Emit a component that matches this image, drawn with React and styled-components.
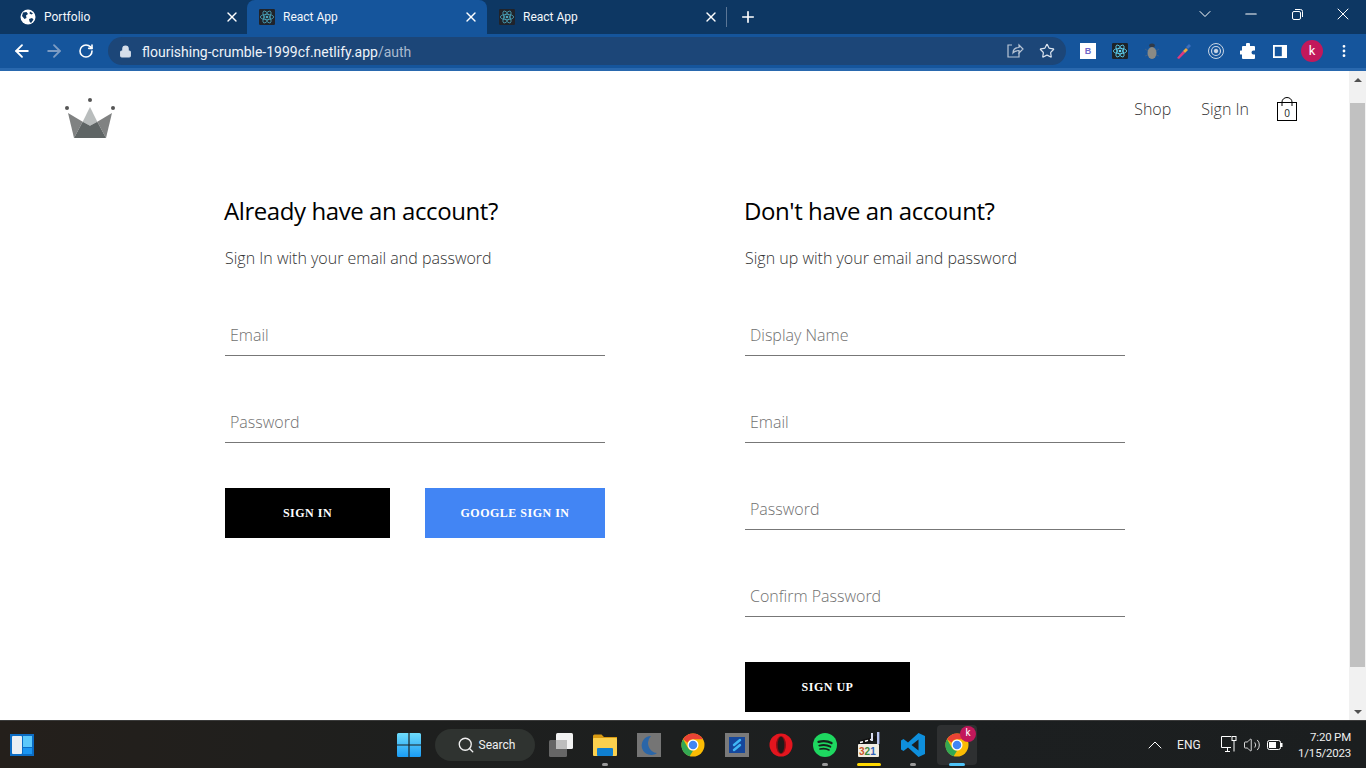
import React from "react";
import styled, { createGlobalStyle } from "styled-components";
import { ArrowLeft, ArrowRight, RotateCw, Lock, X, Plus, ChevronDown, Minus, Star, MoreVertical, Search, ChevronUp, Volume2 } from "lucide-react";

const Global = createGlobalStyle`
  html, body { margin: 0; padding: 0; height: 100%; overflow: hidden; background: #fff; }
  #root { height: 768px; }
  * { box-sizing: border-box; }
`;
const Shell = styled.div`
  width: 1366px; height: 768px; display: flex; flex-direction: column; overflow: hidden;
  font-family: "Open Sans", sans-serif;
`;
const TabStrip = styled.div`
  height: 34px; background: #0d3763; display: flex; align-items: stretch; padding-left: 8px; color: #fff; flex: none;
`;
const Tab = styled.div`
  width: 240px; flex: none; display: flex; align-items: center; padding: 0 8px 0 12px; gap: 8px;
  background: ${p => (p.$active ? "#15559c" : "transparent")};
  border-radius: ${p => (p.$active ? "8px 8px 0 0" : "0")};
  &:first-child { width: 239px; padding-right: 7px; }
`;
const TabTitle = styled.span`
  flex: 1; font: 12px "Roboto", sans-serif; color: #f4f7fb;
`;
const Sep = styled.div`
  width: 1px; height: 20px; background: #5b7696; align-self: center; margin-left: -1px;
`;
const NewTab = styled.div`
  width: 42px; display: flex; align-items: center; justify-content: center;
`;
const WinControls = styled.div`
  margin-left: auto; display: flex; align-items: center; height: 28px; color: #fff;
`;
const WinBtn = styled.div`
  width: 46px; display: flex; justify-content: center; align-items: center;
`;
const Toolbar = styled.div`
  height: 37px; flex: none; background: #15559c; border-bottom: 3px solid #2968ae; display: flex; align-items: center; padding: 0 6px; color: #fff;
`;
const NavBtn = styled.div`
  width: 32px; height: 28px; display: flex; align-items: center; justify-content: center;
  color: ${p => (p.$dim ? "#7d9cc3" : "#fff")};
`;
const Omni = styled.div`
  width: 958px; height: 28px; margin-left: 6px; border-radius: 14px; background: #1c4678; display: flex; align-items: center; padding: 0 8px 0 11px; gap: 10px; flex: none;
`;
const Url = styled.div`
  flex: 1; font: 14px "Roboto", sans-serif; color: #eef3f9; white-space: nowrap; padding-top: 2px;
  span { color: #a9bad0; }
`;
const OmniIcon = styled.div`
  width: 22px; height: 22px; display: flex; align-items: center; justify-content: center; color: #c9d5e4;
`;
const Exts = styled.div`
  display: flex; align-items: center; margin-left: 6px;
`;
const ExtSlot = styled.div`
  width: 32px; height: 28px; display: flex; align-items: center; justify-content: center;
`;
const BSquare = styled.div`
  width: 16px; height: 16px; background: #fff; color: #6f66c8; font: bold 9px "Liberation Sans", sans-serif; display: flex; align-items: center; justify-content: center;
`;
const Avatar = styled.div`
  width: ${p => p.$s || 22}px; height: ${p => p.$s || 22}px; border-radius: 50%; background: #c2185b; color: #fff;
  font: ${p => p.$f || 13}px "Roboto", sans-serif; display: flex; align-items: center; justify-content: center; padding-bottom: 2px;
`;

const Viewport = styled.div`
  flex: 1; min-height: 0; display: flex; background: #fff;
`;
const Page = styled.div`
  flex: 1; min-width: 0; padding: 0 52px 0 65px; overflow: hidden;
`;
const Header = styled.header`
  height: 113px; display: flex; justify-content: space-between; align-items: flex-start; padding-top: 27px;
`;
const Links = styled.nav`
  display: flex; align-items: center; gap: 30px; font-weight: 300; font-size: 16px; color: #333; margin-top: -1px;
`;
const Bag = styled.div`
  width: 20px; height: 24px; position: relative; margin-left: -2px;
  svg { display: block; }
`;
const BagCount = styled.span`
  position: absolute; left: 0; right: 0; top: 9px; text-align: center; font-size: 10px; line-height: 14px; color: #222; font-weight: 400;
`;
const Forms = styled.main`
  width: 900px; margin-left: 160px; display: flex; justify-content: space-between; align-items: flex-start;
`;
const Form = styled.section`
  width: 380px; display: flex; flex-direction: column;
`;
const Heading = styled.h2`
  margin: 9px 0 0 -1px; font-size: 24px; line-height: 36px; font-weight: 400; color: #000; letter-spacing: -0.42px;
`;
const Sub = styled.p`
  margin: 17px 0 0; font-size: 16px; line-height: 24px; font-weight: 300; color: #333; white-space: nowrap;
`;
const Fields = styled.div`
  margin-top: 24px; display: flex; flex-direction: column; gap: 45px; padding-top: 20px;
`;
const Field = styled.div`
  height: 42px; border-bottom: 1px solid #777; padding: 0 5px; display: flex; align-items: center;
  font-size: 16px; font-weight: 300; color: #707070;
`;
const Actions = styled.div`
  margin-top: 45px; display: flex; justify-content: space-between;
`;
const Btn = styled.button`
  width: ${p => p.$w || 165}px; height: 50px; border: 0; background: ${p => p.$bg || "#000"}; color: #fff; padding: 0;
  font: bold 12px "Liberation Serif", serif; letter-spacing: 0.5px; text-transform: uppercase;
`;
const Scrollbar = styled.div`
  width: 17px; flex: none; background: #f1f1f1; display: flex; flex-direction: column; align-items: center;
`;
const SbArrow = styled.div`
  height: 17px; flex: none; width: 100%; display: flex; align-items: center; justify-content: center;
  &::before {
    content: ""; border-left: 4px solid transparent; border-right: 4px solid transparent;
    ${p => (p.$up ? "border-bottom: 4px solid #505050;" : "border-top: 4px solid #505050;")}
  }
`;
const SbThumb = styled.div`
  width: 15px; height: 564px; margin-top: 15px; background: #c1c1c1;
`;
const SbRest = styled.div`
  flex: 1;
`;

const Taskbar = styled.footer`
  height: 48px; flex: none; background: linear-gradient(90deg, #241f1b 0%, #1e1f1e 30%, #1c1f20 70%, #1b1e1f 100%);
  border-top: 1px solid #3b3b3b; display: grid; grid-template-columns: 1fr auto 1fr; align-items: center; color: #fff;
`;
const TbLeft = styled.div`
  padding-left: 10px; display: flex; align-items: center;
`;
const TbCenter = styled.div`
  display: flex; align-items: center; height: 47px;
`;
const TbItem = styled.div`
  width: 44px; height: 44px; display: flex; align-items: center; justify-content: center; position: relative;
  ${p => p.$active && `&::before { content: ""; position: absolute; inset: 2px; border-radius: 4px; background: #2e3031; }`}
  > svg { position: relative; }
`;
const Dot = styled.span`
  position: absolute; bottom: 1px; left: 50%; transform: translateX(-50%); height: 3px; border-radius: 2px;
  width: ${p => p.$w || 6}px; background: ${p => p.$c || "#9a9a9a"};
`;
const Badge = styled.span`
  position: absolute; top: 3px; right: 3px;
`;
const SearchPill = styled.div`
  width: 100px; height: 32px; margin: 0 4px; border-radius: 16px; background: #2f3330; display: flex; align-items: center; justify-content: center; gap: 4px; padding-left: 2px;
  font: 12px "Roboto", sans-serif; color: #f0f0f0;
`;
const Tray = styled.div`
  display: flex; align-items: center; justify-content: flex-end; padding-right: 15px; color: #fff;
`;
const Lang = styled.span`
  font: 12px "Roboto", sans-serif; margin: 0 20px 0 10px; color: #eee; width: 24px; white-space: nowrap;
`;
const TrayIcons = styled.div`
  display: flex; align-items: center; gap: 6px; margin-right: 15px;
`;
const Clock = styled.div`
  font: 11.5px/16px "Roboto", sans-serif; letter-spacing: -0.2px; text-align: right; color: #eee; white-space: nowrap;
`;

const Atom = ({ size = 16, bg = "#20232a", color = "#4aa6bd" }) => (
  <svg width={size} height={size} viewBox="0 0 24 24" style={{ flex: "none" }}>
    <rect width="24" height="24" rx="2" fill={bg} />
    <g fill="none" stroke={color} strokeWidth="1.2">
      <ellipse cx="12" cy="12" rx="10" ry="4" />
      <ellipse cx="12" cy="12" rx="10" ry="4" transform="rotate(60 12 12)" />
      <ellipse cx="12" cy="12" rx="10" ry="4" transform="rotate(120 12 12)" />
    </g>
    <circle cx="12" cy="12" r="2" fill={color} />
  </svg>
);
const Globe = () => (
  <svg width="16" height="16" viewBox="0 0 16 16" style={{ flex: "none" }}>
    <circle cx="8" cy="8" r="7.5" fill="#fff" />
    <path d="M3 3.5 6.5 3 8 5 6 6.5 6.500 9 4.500 10 2 7ZM9 10l3-1 1.500 1.500L11 14l-1.500-1.500ZM10 2.500l3 2-1.500 1-2-1Z" fill="#0d3763" />
  </svg>
);
const Crown = () => (
  <svg width="50" height="41" viewBox="0 0 50 41">
    <circle cx="2" cy="10" r="2" fill="#555" />
    <circle cx="25" cy="2" r="2" fill="#555" />
    <circle cx="48" cy="10" r="2" fill="#555" />
    <polygon points="3,15 17.7,23.7 9,40" fill="#808282" />
    <polygon points="47,15 32.3,23.7 41,40" fill="#808282" />
    <polygon points="25,9 17.7,23.7 25,27.7 32.3,23.7" fill="#b9bdbd" />
    <polygon points="9,40 17.7,23.7 25,27.7 32.3,23.7 41,40" fill="#5f6565" />
  </svg>
);
const ChromeLogo = ({ size = 24 }) => (
  <svg width={size} height={size} viewBox="0 0 48 48">
    <circle cx="24" cy="24" r="23" fill="#fbbc04" />
    <path d="M24 1a23 23 0 0 1 20 11.500H24a11.500 11.500 0 0 0-10.500 6.800L4.100 12.500A23 23 0 0 1 24 1Z" fill="#ea4335" />
    <path d="M4.100 12.500 14 29.800A11.500 11.500 0 0 0 24 35.500l-6.700 11A23 23 0 0 1 4.100 12.500Z" fill="#34a853" />
    <circle cx="24" cy="24" r="11" fill="#fff" />
    <circle cx="24" cy="24" r="8.500" fill="#4285f4" />
  </svg>
);
const WinLogo = () => (
  <svg width="24" height="24" viewBox="0 0 24 24">
    <defs>
      <linearGradient id="wl" x1="0" y1="0" x2="0" y2="1"><stop offset="0" stopColor="#6fdcfb" /><stop offset="1" stopColor="#1a9cf5" /></linearGradient>
    </defs>
    <path d="M0 1.500A1.500 1.500 0 0 1 1.500 0H11.400V11.400H0ZM12.600 0H22.500A1.500 1.500 0 0 1 24 1.500V11.400H12.600ZM0 12.600H11.400V24H1.500A1.500 1.500 0 0 1 0 22.500ZM12.600 12.600H24V22.500A1.500 1.500 0 0 1 22.500 24H12.600Z" fill="url(#wl)" />
  </svg>
);
const Widgets = () => (
  <svg width="24" height="22" viewBox="0 0 24 22">
    <rect width="24" height="22" fill="#0b6cc4" />
    <rect x="2" y="2" width="10" height="18" rx="1" fill="#e9eef3" />
    <rect x="13" y="2" width="9" height="11" fill="#5cc8fb" />
    <rect x="13" y="14" width="9" height="6" fill="#1a95f2" />
  </svg>
);
const TaskView = () => (
  <svg width="24" height="24" viewBox="0 0 24 24">
    <rect x="7" y="0" width="17" height="16" rx="1.500" fill="#f2f2f2" />
    <rect x="0" y="7" width="18" height="17" rx="1.500" fill="#6d6d6d" fillOpacity=".92" />
    <rect x="7" y="7" width="11" height="9" fill="#bdbdbd" />
  </svg>
);
const Folder = () => (
  <svg width="24" height="22" viewBox="0 0 24 22">
    <path d="M0 2a1.500 1.500 0 0 1 1.500-1.500h7L11 3h13v3H0Z" fill="#d99a12" />
    <rect y="4" width="24" height="18" rx="1" fill="#fbd04e" />
    <rect x="4" y="14" width="16" height="8" rx="1" fill="#0f7fd0" />
  </svg>
);
const MoonApp = () => (
  <svg width="24" height="24" viewBox="0 0 24 24">
    <rect width="24" height="24" fill="#757575" />
    <path d="M14 3a9.500 9.500 0 1 0 6 17A10 10 0 0 1 14 3Z" fill="#2a66a8" />
    <path d="M15 3a9 9 0 0 1 6 14A9 9 0 0 0 15 3Z" fill="#4a4f55" />
  </svg>
);
const Stack = () => (
  <svg width="24" height="24" viewBox="0 0 24 24">
    <rect width="24" height="24" fill="#7a7a7a" />
    <rect x="4" y="4" width="16" height="16" fill="#15479c" />
    <path d="M15 7 9 12M15 12l-6 5" fill="none" stroke="#3fb7f5" strokeWidth="2.400" strokeLinecap="round" />
  </svg>
);
const Opera = () => (
  <svg width="24" height="24" viewBox="0 0 24 24">
    <circle cx="12" cy="12" r="11.500" fill="#e3151e" />
    <ellipse cx="12" cy="12" rx="5" ry="9" fill="#8a0d14" />
    <ellipse cx="12" cy="12" rx="3.400" ry="8.200" fill="#201a1a" />
  </svg>
);
const Spotify = () => (
  <svg width="24" height="24" viewBox="0 0 24 24">
    <circle cx="12" cy="12" r="12" fill="#1ed760" />
    <g fill="none" stroke="#15221a" strokeLinecap="round">
      <path d="M5.500 8.800c4.500-1.200 9.500-.8 13 1.300" strokeWidth="2.300" />
      <path d="M6.300 12.600c4-1 8-.6 11 1.100" strokeWidth="1.900" />
      <path d="M7 16c3.200-.7 6.600-.4 9 1" strokeWidth="1.600" />
    </g>
  </svg>
);
const Clapper = () => (
  <svg width="24" height="26" viewBox="0 0 24 26">
    <path d="M1 9 19 4l1 4L2 13Z" fill="#111" />
    <path d="M3 10.500 6 9.700M8 9.200l3-.8M13 7.800l3-.8" stroke="#fff" strokeWidth="1.500" />
    <rect x="14" y="1" width="2" height="8" fill="#d8dcf0" />
    <rect x="20" y="0" width="2.400" height="12" fill="#b9c4f0" />
    <rect x="1" y="12" width="21" height="13" rx="1" fill="#f1ece2" />
    <text x="2" y="23" fontSize="10" fontWeight="700" fontFamily="Liberation Sans" fill="#c9542a">3<tspan fill="#3b8a3e">2</tspan><tspan fill="#2f62b8">1</tspan></text>
  </svg>
);
const VSCode = () => (
  <svg width="24" height="24" viewBox="0 0 24 24">
    <path d="M17.500 0 24 3v18l-6.500 3L7 14.500 2.500 18 0 16.500V7.500L2.500 6 7 9.500Z M17.500 6.500 10.500 12l7 5.500Z" fill="#0e8fdc" fillRule="evenodd" />
  </svg>
);
const ShareIcon = () => (
  <svg width="18" height="18" viewBox="0 0 18 18" fill="none" stroke="#b8c5d6" strokeWidth="1.200">
    <path d="M6 3H2v12h11v-4" />
    <path d="M7 11c0-4 3-5.500 6-5.500V3l4 4-4 4V8.500c-2.500 0-4.500.5-6 2.500Z" />
  </svg>
);
const Bug = () => (
  <svg width="18" height="18" viewBox="0 0 18 18">
    <path d="M2 7l3 2M16 7l-3 2M2 14l3-1M16 14l-3-1" stroke="#3a5f8c" strokeWidth="1" />
    <ellipse cx="9" cy="3.500" rx="2.800" ry="2" fill="#2f3a48" />
    <ellipse cx="9" cy="11" rx="4.500" ry="6" fill="#8a8a85" />
  </svg>
);
const Dropper = () => (
  <svg width="18" height="18" viewBox="0 0 18 18">
    <path d="M2 16l6-7 2 2-6 6Z" fill="#e0397e" />
    <path d="M8 9l3-3 2 2-3 3Z" fill="#f0a83c" />
    <path d="M11 5l3-3 2 2-3 3Z" fill="#3c6fbf" />
  </svg>
);
const Rings = () => (
  <svg width="18" height="18" viewBox="0 0 18 18" fill="none" stroke="#c9d5e4">
    <circle cx="9" cy="9" r="7.500" />
    <circle cx="9" cy="9" r="4.500" strokeWidth="1.200" />
    <circle cx="9" cy="9" r="1.800" fill="#c9d5e4" />
  </svg>
);
const SidePanel = () => (
  <svg width="14" height="13" viewBox="0 0 14 13">
    <rect width="14" height="13" fill="#fff" />
    <rect x="1.800" y="1.800" width="7" height="9.400" fill="#15559c" />
  </svg>
);
const PuzzleSolid = () => (
  <svg width="16" height="16" viewBox="0 0 16 16">
    <path d="M6 1.500a2 2 0 0 1 4 0V3h4a1 1 0 0 1 1 1v3.500h-1.500a2 2 0 0 0 0 4H15V15a1 1 0 0 1-1 1H3a1 1 0 0 1-1-1v-3.500H1a2 2 0 0 1 0-4h1V4a1 1 0 0 1 1-1h3Z" fill="#fff" />
  </svg>
);
const Restore = () => (
  <svg width="11" height="11" viewBox="0 0 11 11" fill="none" stroke="#fff">
    <rect x=".5" y="2.500" width="8" height="8" rx="1.500" />
    <path d="M3 .5h5.500a2 2 0 0 1 2 2V8" />
  </svg>
);
const Monitor = () => (
  <svg width="16" height="17" viewBox="0 0 16 17" fill="none" stroke="#fff">
    <path d="M10 11.500H.5V.5H10" />
    <path d="M4 15.500h5M6.500 11.500v4" />
    <rect x="11" y=".5" width="4" height="4" />
    <path d="M13 4.500v11" />
  </svg>
);
const Battery = () => (
  <svg width="16" height="10" viewBox="0 0 16 10">
    <rect x=".5" y=".5" width="13" height="9" rx="2" fill="none" stroke="#fff" />
    <rect x="2" y="2" width="7" height="6" fill="#fff" />
    <rect x="14" y="3" width="1.500" height="4" fill="#fff" />
  </svg>
);
const BagIcon = () => (
  <svg width="20" height="24" viewBox="0 0 20 24" fill="none" stroke="#000">
    <rect x=".5" y="5.500" width="19" height="18" />
    <path d="M5 9V5a5 4.500 0 0 1 10 0v4" />
  </svg>
);

const TabItem = ({ icon, title, active }) => (
  <Tab $active={active}>
    {icon}
    <TabTitle>{title}</TabTitle>
    <X size={16} strokeWidth={2} color="#fff" />
  </Tab>
);

const App = () => (
  <Shell>
    <Global />
    <TabStrip>
      <TabItem icon={<Globe />} title="Portfolio" />
      <TabItem icon={<Atom />} title="React App" active />
      <TabItem icon={<Atom />} title="React App" />
      <Sep />
      <NewTab><Plus size={18} strokeWidth={2.2} /></NewTab>
      <WinControls>
        <WinBtn><ChevronDown size={20} strokeWidth={1.2} /></WinBtn>
        <WinBtn><Minus size={18} strokeWidth={1.4} /></WinBtn>
        <WinBtn><Restore /></WinBtn>
        <WinBtn><X size={20} strokeWidth={1.2} /></WinBtn>
      </WinControls>
    </TabStrip>
    <Toolbar>
      <NavBtn><ArrowLeft size={20} strokeWidth={2.2} /></NavBtn>
      <NavBtn $dim><ArrowRight size={20} strokeWidth={2.2} /></NavBtn>
      <NavBtn><RotateCw size={16} strokeWidth={2.4} /></NavBtn>
      <Omni>
        <Lock size={13} fill="#d5deea" color="#d5deea" />
        <Url>flourishing-crumble-1999cf.netlify.app<span>/auth</span></Url>
        <OmniIcon><ShareIcon /></OmniIcon>
        <OmniIcon><Star size={16} strokeWidth={1.8} color="#dbe3ee" /></OmniIcon>
      </Omni>
      <Exts>
        <ExtSlot><BSquare>B</BSquare></ExtSlot>
        <ExtSlot><Atom size={16} bg="#1e2328" color="#61dafb" /></ExtSlot>
        <ExtSlot><Bug /></ExtSlot>
        <ExtSlot><Dropper /></ExtSlot>
        <ExtSlot><Rings /></ExtSlot>
        <ExtSlot><PuzzleSolid /></ExtSlot>
        <ExtSlot><SidePanel /></ExtSlot>
        <ExtSlot><Avatar>k</Avatar></ExtSlot>
        <ExtSlot><MoreVertical size={16} strokeWidth={2.2} /></ExtSlot>
      </Exts>
    </Toolbar>
    <Viewport>
      <Page>
        <Header>
          <Crown />
          <Links>
            <span>Shop</span>
            <span>Sign In</span>
            <Bag>
              <BagIcon />
              <BagCount>0</BagCount>
            </Bag>
          </Links>
        </Header>
        <Forms>
          <Form>
            <Heading>Already have an account?</Heading>
            <Sub>Sign In with your email and password</Sub>
            <Fields>
              <Field>Email</Field>
              <Field>Password</Field>
            </Fields>
            <Actions>
              <Btn>Sign in</Btn>
              <Btn $w={180} $bg="#4285f4">Google sign in</Btn>
            </Actions>
          </Form>
          <Form>
            <Heading>Don't have an account?</Heading>
            <Sub>Sign up with your email and password</Sub>
            <Fields>
              <Field>Display Name</Field>
              <Field>Email</Field>
              <Field>Password</Field>
              <Field>Confirm Password</Field>
            </Fields>
            <Actions>
              <Btn>Sign up</Btn>
            </Actions>
          </Form>
        </Forms>
      </Page>
      <Scrollbar>
        <SbArrow $up />
        <SbThumb />
        <SbRest />
        <SbArrow />
      </Scrollbar>
    </Viewport>
    <Taskbar>
      <TbLeft><Widgets /></TbLeft>
      <TbCenter>
        <TbItem><WinLogo /></TbItem>
        <SearchPill><Search size={18} strokeWidth={1.8} />Search</SearchPill>
        <TbItem><TaskView /></TbItem>
        <TbItem><Folder /><Dot /></TbItem>
        <TbItem><MoonApp /></TbItem>
        <TbItem><ChromeLogo /></TbItem>
        <TbItem><Stack /></TbItem>
        <TbItem><Opera /></TbItem>
        <TbItem><Spotify /><Dot /></TbItem>
        <TbItem><Clapper /><Dot $w={24} $c="#ffd800" /></TbItem>
        <TbItem><VSCode /><Dot /></TbItem>
        <TbItem $active>
          <ChromeLogo />
          <Badge><Avatar $s={16} $f={10}>k</Avatar></Badge>
          <Dot $w={16} $c="#4fc3f7" />
        </TbItem>
      </TbCenter>
      <Tray>
        <ChevronUp size={24} strokeWidth={1} />
        <Lang>ENG</Lang>
        <TrayIcons>
          <Monitor />
          <Volume2 size={18} strokeWidth={1.1} />
          <Battery />
        </TrayIcons>
        <Clock>7:20 PM<br />1/15/2023</Clock>
      </Tray>
    </Taskbar>
  </Shell>
);

export default App;
